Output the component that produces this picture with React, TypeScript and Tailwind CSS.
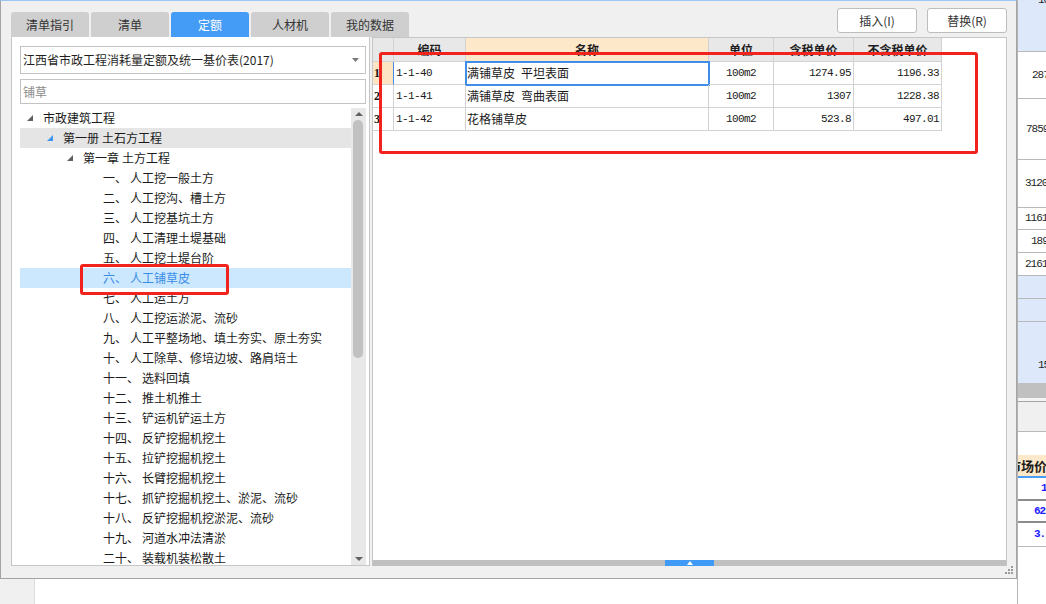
import React from "react";

type TreeNode = {
  level: 0 | 1 | 2 | 3;
  a: string;
  b?: string;
  state?: "hover" | "sel";
};

const treeNodes: TreeNode[] = [
  { level: 0, a: "市政建筑工程" },
  { level: 1, a: "第一册", b: "土石方工程", state: "hover" },
  { level: 2, a: "第一章", b: "土方工程" },
  { level: 3, a: "一、", b: "人工挖一般土方" },
  { level: 3, a: "二、", b: "人工挖沟、槽土方" },
  { level: 3, a: "三、", b: "人工挖基坑土方" },
  { level: 3, a: "四、", b: "人工清理土堤基础" },
  { level: 3, a: "五、", b: "人工挖土堤台阶" },
  { level: 3, a: "六、", b: "人工铺草皮", state: "sel" },
  { level: 3, a: "七、", b: "人工运土方" },
  { level: 3, a: "八、", b: "人工挖运淤泥、流砂" },
  { level: 3, a: "九、", b: "人工平整场地、填土夯实、原土夯实" },
  { level: 3, a: "十、", b: "人工除草、修培边坡、路肩培土" },
  { level: 3, a: "十一、", b: "选料回填" },
  { level: 3, a: "十二、", b: "推土机推土" },
  { level: 3, a: "十三、", b: "铲运机铲运土方" },
  { level: 3, a: "十四、", b: "反铲挖掘机挖土" },
  { level: 3, a: "十五、", b: "拉铲挖掘机挖土" },
  { level: 3, a: "十六、", b: "长臂挖掘机挖土" },
  { level: 3, a: "十七、", b: "抓铲挖掘机挖土、淤泥、流砂" },
  { level: 3, a: "十八、", b: "反铲挖掘机挖淤泥、流砂" },
  { level: 3, a: "十九、", b: "河道水冲法清淤" },
  { level: 3, a: "二十、", b: "装载机装松散土" },
];

const levelPad = ["pl-[7px]", "pl-[27px]", "pl-[47px]", "pl-[67px]"];

const rows = [
  { n: "1", code: "1-1-40", name: ["满铺草皮", "平坦表面"], unit: "100m2", p1: "1274.95", p2: "1196.33" },
  { n: "2", code: "1-1-41", name: ["满铺草皮", "弯曲表面"], unit: "100m2", p1: "1307", p2: "1228.38" },
  { n: "3", code: "1-1-42", name: ["花格铺草皮"], unit: "100m2", p1: "523.8", p2: "497.01" },
];

const tabs = ["清单指引", "清单", "定额", "人材机", "我的数据"];

const mono = "font-['Liberation_Mono',monospace] text-[11px] tracking-[-0.6px]";

function Caret({ blue }: { blue?: boolean }) {
  return (
    <svg width="6" height="6" viewBox="0 0 6 6" className="shrink-0">
      <polygon points="6,0 6,6 0,6" fill={blue ? "#3d95f0" : "#5f5f5f"} />
    </svg>
  );
}

function TreeRow({ node }: { node: TreeNode }) {
  const look =
    node.state === "sel"
      ? "bg-[#cce8ff] text-[#3a8ee6]"
      : node.state === "hover"
        ? "bg-[#e5e5e5] text-[#1a1a1a]"
        : "text-[#1a1a1a]";
  return (
    <div className={`flex h-[20px] items-center whitespace-nowrap ${levelPad[node.level]} ${look}`}>
      <span className="flex w-[16px] shrink-0 items-center">
        {node.level < 3 ? <Caret blue={node.level === 1} /> : null}
      </span>
      <span>{node.a}</span>
      {node.b ? <span className="ml-[3px]">{node.b}</span> : null}
    </div>
  );
}

function LeftPanel() {
  return (
    <div className="flex w-[359px] shrink-0 flex-col border-x border-b border-[#c6c6c6] bg-white pl-[8px] pt-[9px]">
      <div className="flex h-[28px] w-[346px] items-center border border-[#c3c3c3] pl-[2px] pr-[6px]">
        <span className="flex-1 whitespace-nowrap">江西省市政工程消耗量定额及统一基价表(2017)</span>
        <svg width="7" height="4" viewBox="0 0 7 4">
          <polygon points="0,0 7,0 3.5,4" fill="#7a7a7a" />
        </svg>
      </div>
      <div className="mt-[5px] flex h-[25px] w-[346px] items-center border border-[#c3c3c3] pl-[2px] text-[#8c8c8c]">
        铺草
      </div>
      <div className="mt-[4px] flex min-h-0 w-[346px] flex-1">
        <div className="relative min-w-0 flex-1 overflow-hidden">
          {treeNodes.map((n, i) => (
            <TreeRow key={i} node={n} />
          ))}
          <div className="absolute left-[60px] top-[156px] h-[31px] w-[149px] rounded-[3px] border-[3px] border-[#f2231c]" />
        </div>
        <div className="flex w-[15px] shrink-0 flex-col bg-[#e8e8e8]">
          <div className="flex h-[12px] items-center justify-center">
            <svg width="8" height="4" viewBox="0 0 8 4">
              <polygon points="0,4 8,4 4,0" fill="#606060" />
            </svg>
          </div>
          <div className="ml-[2px] h-[238px] w-[10px] rounded-full bg-[#c1c1c1]" />
          <div className="flex-1" />
          <div className="flex h-[12px] items-center justify-center">
            <svg width="8" height="4" viewBox="0 0 8 4">
              <polygon points="0,0 8,0 4,4" fill="#606060" />
            </svg>
          </div>
        </div>
      </div>
    </div>
  );
}

function Table() {
  const line = "border-r border-b border-[#d2d2d2]";
  return (
    <div className="relative flex w-[635px] shrink-0 flex-col border-x border-t border-[#c6c6c6] bg-white">
      <div className="flex h-[24px] font-bold text-[#1e1e1e]">
        <div className={`w-[21px] bg-[#e8e8e8] ${line}`} />
        <div className={`flex w-[72px] items-center justify-center bg-[#e8e8e8] ${line}`}>编码</div>
        <div className={`flex w-[243px] items-center justify-center bg-[#fde8c9] ${line}`}>名称</div>
        <div className={`flex w-[65px] items-center justify-center bg-[#e8e8e8] ${line}`}>单位</div>
        <div className={`flex w-[80px] items-center justify-center bg-[#e8e8e8] ${line}`}>含税单价</div>
        <div className={`flex w-[88px] items-center justify-center bg-[#e8e8e8] ${line}`}>不含税单价</div>
      </div>
      {rows.map((r, i) => (
        <div key={r.code} className="flex h-[23px] text-[#1a1a1a]">
          <div
            className={`flex w-[21px] items-center pl-[1px] font-['Liberation_Serif',serif] text-[12px] font-bold ${line} ${
              i === 0 ? "border-r-[#3e8ee8] bg-[#fde5c4]" : ""
            }`}
          >
            {r.n}
          </div>
          <div className={`flex w-[72px] items-center pl-[2px] ${mono} ${line}`}>{r.code}</div>
          <div
            className={`flex w-[243px] items-center pl-[1px] ${line} ${
              i === 0 ? "outline-2 -outline-offset-1 outline-[#3e8ee8]" : ""
            }`}
          >
            <span>{r.name[0]}</span>
            {r.name[1] ? <span className="ml-[6px]">{r.name[1]}</span> : null}
          </div>
          <div className={`flex w-[65px] items-center justify-center ${mono} ${line}`}>{r.unit}</div>
          <div className={`flex w-[80px] items-center justify-end pr-[2px] ${mono} ${line}`}>{r.p1}</div>
          <div className={`flex w-[88px] items-center justify-end pr-[2px] ${mono} ${line}`}>{r.p2}</div>
        </div>
      ))}
      <div className="flex-1" />
      <div className="flex h-[6px] justify-center bg-[#c0c0c0]">
        <div className="flex w-[49px] items-center justify-center bg-[#3f9af5]">
          <svg width="6" height="4" viewBox="0 0 6 4">
            <polygon points="0,4 6,4 3,0" fill="#ffffff" />
          </svg>
        </div>
      </div>
      <div className="absolute left-[6px] top-[14px] h-[102px] w-[599px] rounded-[3px] border-[3px] border-[#f2231c]" />
    </div>
  );
}

function Dialog() {
  return (
    <div className="relative flex h-[579px] flex-col border-x border-b border-t border-[#a3a3a3] border-t-[#9cc6f3] bg-[#f0f0f0]">
      <div className="flex h-[36px] pl-[10px] pr-[9px]">
        <div className="mt-[11px] flex gap-[2px]">
          {tabs.map((t) => (
            <div
              key={t}
              className={`flex h-[25px] w-[78px] items-center justify-center rounded-t-[3px] ${
                t === "定额" ? "bg-[#459cf7] text-white" : "bg-[#cfcfcf] text-[#333333]"
              }`}
            >
              {t}
            </div>
          ))}
        </div>
        <div className="ml-auto mt-[7px] flex gap-[10px]">
          <div className="flex h-[25px] w-[80px] items-center justify-center rounded-[3px] border border-[#bdbdbd] bg-white text-[#333333]">
            插入(I)
          </div>
          <div className="flex h-[25px] w-[80px] items-center justify-center rounded-[3px] border border-[#bdbdbd] bg-white text-[#333333]">
            替换(R)
          </div>
        </div>
      </div>
      <div className="flex h-[529px] gap-[2px] pl-[10px] pr-[9px]">
        <LeftPanel />
        <Table />
      </div>
      <svg width="9" height="9" viewBox="0 0 9 9" className="absolute bottom-[3px] right-[3px]">
        <rect x="7" y="0" width="2" height="2" fill="#9a9a9a" />
        <rect x="4" y="3" width="2" height="2" fill="#9a9a9a" />
        <rect x="7" y="3" width="2" height="2" fill="#9a9a9a" />
        <rect x="1" y="6" width="2" height="2" fill="#9a9a9a" />
        <rect x="4" y="6" width="2" height="2" fill="#9a9a9a" />
        <rect x="7" y="6" width="2" height="2" fill="#9a9a9a" />
      </svg>
    </div>
  );
}

function BackStrip() {
  const cell = "flex shrink-0 items-center border-b border-[#b9b9b9] whitespace-nowrap";
  return (
    <div className="flex h-[604px] w-[29px] shrink-0 flex-col overflow-hidden border-l border-[#b4b4b4] font-['Liberation_Mono',monospace] text-[11px] tracking-[-1px] text-[#1f1f1f]">
      <div className={`h-[52px] items-start bg-[#dde8fb] pl-[20px] ${cell}`}>
        <span className="-mt-[8px]">10</span>
      </div>
      <div className={`h-[47px] pl-[14px] ${cell}`}>287</div>
      <div className={`h-[61px] pl-[8px] ${cell}`}>7859</div>
      <div className={`h-[48px] pl-[7px] ${cell}`}>3120</div>
      <div className={`h-[22px] pl-[7px] ${cell}`}>1161</div>
      <div className={`h-[23px] pl-[13px] ${cell}`}>189</div>
      <div className={`h-[23px] pl-[7px] ${cell}`}>2161</div>
      <div className={`h-[23px] bg-[#dde8fb] ${cell}`} />
      <div className={`h-[23px] bg-[#dde8fb] ${cell}`} />
      <div className={`h-[61px] items-end bg-[#dde8fb] pb-[10px] pl-[20px] ${cell} border-b-0`}>15</div>
      <div className="h-[15px] shrink-0 bg-[#c0c0c0]" />
      <div className="h-[4px] shrink-0 border-b border-[#a6a6a6] bg-[#f4f4f4]" />
      <div className="h-[30px] shrink-0 border-b border-[#b9b9b9] bg-[#f0f0f0]" />
      <div className="h-[23px] shrink-0 bg-white" />
      <div className="flex h-[23px] shrink-0 items-center overflow-hidden border-b-2 border-[#4a9cf5] bg-[#fde8c9] font-['Noto_Sans_CJK_SC',sans-serif] text-[13px] font-bold tracking-normal text-[#1a1a1a]">
        <span className="-ml-[10px] whitespace-nowrap">市场价</span>
      </div>
      <div className="flex h-[23px] shrink-0 items-center border-b-2 border-[#8c8c8c] pl-[23px] font-bold text-[#1a1aff]">1</div>
      <div className="flex h-[22px] shrink-0 items-center border-b-2 border-[#8c8c8c] pl-[16px] font-bold text-[#1a1aff]">62</div>
      <div className="flex h-[24px] shrink-0 items-center border-b border-[#b9b9b9] pl-[16px] font-bold text-[#1a1aff]">3.</div>
      <div className="flex-1 bg-white" />
    </div>
  );
}

export default function App() {
  return (
    <div className="flex h-[604px] w-[1046px] overflow-hidden bg-white font-['Noto_Sans_CJK_SC',sans-serif] text-[12px] text-[#1f1f1f]">
      <div className="flex w-[1017px] shrink-0 flex-col">
        <Dialog />
        <div className="flex h-[25px]">
          <div className="w-[35px] border-r border-[#dcdcdc] bg-[#f0f0f0]" />
        </div>
      </div>
      <BackStrip />
    </div>
  );
}
